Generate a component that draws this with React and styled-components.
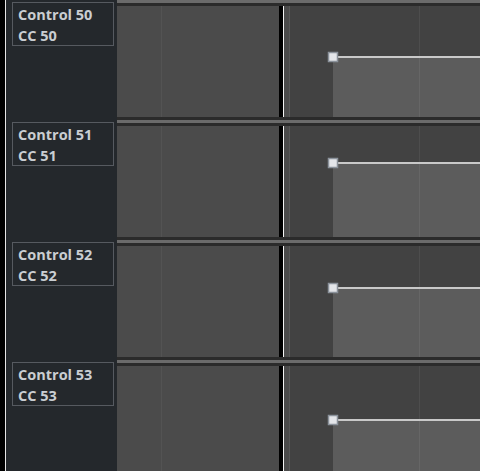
import React from "react";
import styled, { createGlobalStyle } from "styled-components";

const GlobalStyle = createGlobalStyle`
  html, body {
    margin: 0;
    padding: 0;
    background: #000;
    overflow: hidden;
  }
`;

const tracks = [
  { name: "Control 50", cc: "CC 50", pointY: 51 },
  { name: "Control 51", cc: "CC 51", pointY: 37 },
  { name: "Control 52", cc: "CC 52", pointY: 42 },
  { name: "Control 53", cc: "CC 53", pointY: 54 },
];

const Frame = styled.div`
  display: flex;
  width: 480px;
  height: 471px;
  overflow: hidden;
  font-family: "Open Sans", "Liberation Sans", sans-serif;
`;

// black strip + thin white edge
const EdgeStrip = styled.div`
  width: 5px;
  flex-shrink: 0;
  background: #000;
  border-right: 1px solid #e6e6e6;
`;

const Sidebar = styled.div`
  width: 111px;
  flex-shrink: 0;
  background: #24282c;
  display: flex;
  flex-direction: column;
`;

const LabelSlot = styled.div`
  height: 120px;
  flex-shrink: 0;
  padding: 2px 0 0 6px;
  box-sizing: border-box;
`;

const LabelBox = styled.div`
  width: 102px;
  height: 44px;
  box-sizing: border-box;
  border: 1px solid #565a60;
  padding: 1px 0 0 5px;
  color: #caced2;
  font-size: 14.5px;
  font-weight: 700;
  line-height: 21px;
  white-space: nowrap;
`;

const Lanes = styled.div`
  flex: 1;
  display: flex;
  flex-direction: column;
  background: #2b2b2b;
`;

// separator between tracks: dark / grey / dark
const Separator = styled.div`
  height: 9px;
  flex-shrink: 0;
  box-sizing: border-box;
  border-top: 3px solid #2b2b2b;
  border-bottom: 3px solid #2b2b2b;
  background: #6b6b6b;
`;

const TopSeparator = styled(Separator)`
  height: 6px;
  border-top: none;
`;

const Track = styled.div`
  height: 111px;
  flex-shrink: 0;
  display: flex;
`;

const LeftZone = styled.div`
  width: 162px;
  flex-shrink: 0;
  background:
    linear-gradient(to right, transparent 44px, #535353 44px, #535353 45px, transparent 45px),
    #4b4b4b;
`;

const Cursor = styled.div`
  width: 4px;
  flex-shrink: 0;
  background: #000;
  border-right: 1px solid #f2f2f2;
`;

const Gap = styled.div`
  width: 5px;
  flex-shrink: 0;
  background: #4b4b4b;
  border-right: 1px solid #585858;
`;

const AutomationLane = styled.div`
  flex: 1;
  position: relative;
  background:
    linear-gradient(to right, transparent 129px, #4d4d4d 129px, #4d4d4d 130px, transparent 130px),
    #424242;
`;

const Curve = styled.svg`
  position: absolute;
  inset: 0;
  width: 100%;
  height: 100%;
  display: block;
`;

const POINT_X = 43;

function AutomationCurve({ y }) {
  return (
    <Curve>
      <rect x={POINT_X} y={y} width="400" height="200" fill="rgba(255,255,255,0.143)" />
      <line x1={POINT_X} y1={y} x2="400" y2={y} stroke="#c9c9c9" strokeWidth="2" />
      <rect
        x={POINT_X - 4.5}
        y={y - 4.5}
        width="9"
        height="9"
        fill="#e3e5e9"
        stroke="#8b929b"
        strokeWidth="1.5"
      />
    </Curve>
  );
}

export default function App() {
  return (
    <>
      <GlobalStyle />
      <Frame>
        <EdgeStrip />
        <Sidebar>
          {tracks.map((t) => (
            <LabelSlot key={t.name}>
              <LabelBox>
                <div>{t.name}</div>
                <div>{t.cc}</div>
              </LabelBox>
            </LabelSlot>
          ))}
        </Sidebar>
        <Lanes>
          <TopSeparator />
          {tracks.map((t) => (
            <React.Fragment key={t.name}>
              <Track>
                <LeftZone />
                <Cursor />
                <Gap />
                <AutomationLane>
                  <AutomationCurve y={t.pointY} />
                </AutomationLane>
              </Track>
              <Separator />
            </React.Fragment>
          ))}
        </Lanes>
      </Frame>
    </>
  );
}
